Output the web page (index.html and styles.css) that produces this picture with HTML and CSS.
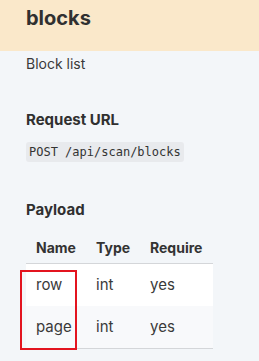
FILE: index.html
```html
<!DOCTYPE html>
<html lang="en">
<head>
    <meta charset="UTF-8">
    <meta name="viewport" content="width=device-width, initial-scale=1.0">
    <title>blocks</title>
    <link rel="stylesheet" href="styles.css">
</head>
<body>
    <header class="api-head">
        <h1>blocks</h1>
    </header>

    <main class="api-body">
        <p class="summary">Block list</p>

        <h2>Request URL</h2>
        <code class="endpoint">POST /api/scan/blocks</code>

        <h2 class="payload-title">Payload</h2>
        <div class="table-wrap">
            <table class="params">
                <thead>
                    <tr>
                        <th class="col-name">Name</th>
                        <th class="col-type">Type</th>
                        <th class="col-req">Require</th>
                    </tr>
                </thead>
                <tbody>
                    <tr>
                        <td>row</td>
                        <td>int</td>
                        <td>yes</td>
                    </tr>
                    <tr class="alt">
                        <td>page</td>
                        <td>int</td>
                        <td>yes</td>
                    </tr>
                </tbody>
            </table>
            <!-- highlight drawn over the name column -->
            <div class="highlight"></div>
        </div>
    </main>
</body>
</html>
```

FILE: styles.css
```css
body {
    margin: 0;
    font-family: Inter, "Noto Sans", sans-serif;
    background-color: #f3f6f9;
    color: #333;
}
.api-head {
    height: 51px;
    box-sizing: border-box;
    padding: 6px 26px 0;
    background-color: #fae8ca;
}
h1 {
    margin: 0;
    font-size: 20px;
    line-height: 24px;
    font-weight: 700;
    color: #303030;
}
.api-body {
    padding: 0 26px 20px;
}
.summary {
    margin: 3px 0 0;
    font-size: 14px;
    line-height: 20px;
    color: #3a3a3a;
}
h2 {
    margin: 36px 0 0;
    font-size: 15px;
    line-height: 20px;
    font-weight: 700;
    color: #303030;
}
.endpoint {
    display: inline-block;
    margin-top: 12px;
    padding: 2px 3px;
    font-family: "DejaVu Sans Mono", monospace;
    font-size: 12px;
    line-height: 16px;
    color: #333;
    background-color: #e8eaed;
    border-radius: 3px;
}
.payload-title {
    margin-top: 38px;
}
.table-wrap {
    position: relative;
    margin-top: 10px;
    width: 187px;
}
.params {
    width: 187px;
    border-collapse: collapse;
    table-layout: fixed;
}
.params th {
    padding: 8px 10px 5px;
    font-size: 14px;
    line-height: 20px;
    text-align: left;
    color: #333;
    border-bottom: 1px solid #d4d6d9;
}
.col-name {
    width: 40px;
}
.col-type {
    width: 34px;
}
.params td {
    padding: 10px;
    font-size: 15px;
    line-height: 22px;
    color: #3a3a3a;
    background-color: #fff;
}
.params tr.alt td {
    background-color: #f8f9fb;
    border-bottom: 1px solid #d4d6d9;
}
.highlight {
    position: absolute;
    left: -6px;
    top: 40px;
    width: 53px;
    height: 76px;
    border: 2px solid #e3141f;
}
```
